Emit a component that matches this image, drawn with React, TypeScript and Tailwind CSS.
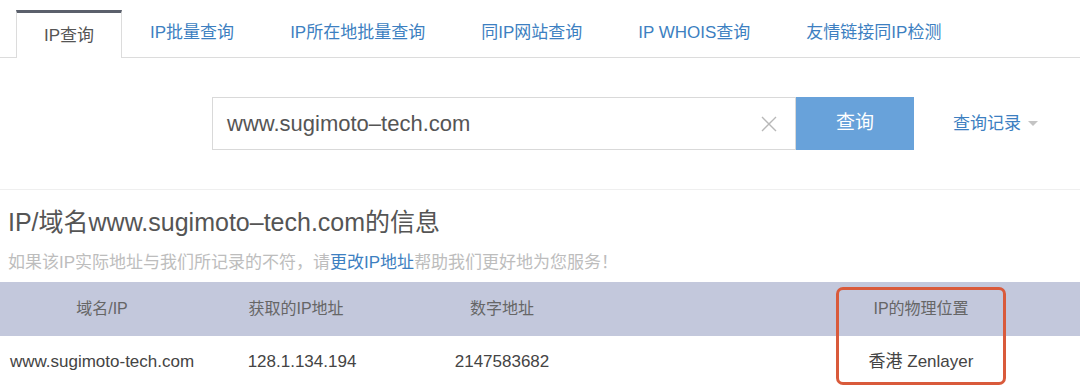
import React from "react";

const font = { fontFamily: '"Liberation Sans", "Noto Sans CJK SC", sans-serif' };

const tabs = ["IP批量查询", "IP所在地批量查询", "同IP网站查询", "IP WHOIS查询", "友情链接同IP检测"];

export default function App() {
  return (
    <div className="relative w-[1080px] h-[387px] bg-white overflow-hidden" style={font}>
      {/* Tabs */}
      <div className="flex items-end h-[58px] pl-4 border-b border-[#dcdcdc]">
        <div className="h-[48px] -mb-px flex items-center px-[27px] bg-white border-x border-[#dcdcdc] border-t-[3px] border-t-[#5b606c] text-[17px] text-[#555]">
          IP查询
        </div>
        {tabs.map((t) => (
          <div key={t} className="h-[48px] flex items-center px-[28px] text-[17px] text-[#3d7fc1]">
            {t}
          </div>
        ))}
      </div>

      {/* Search */}
      <div className="h-[132px] border-b border-[#efefef] flex items-start pt-[39px] pl-[212px]">
        <div className="w-[584px] h-[53px] border border-[#d9d9d9] flex items-center pl-[14px] pr-[16px]">
          <span className="flex-1 text-[22px] text-[#555]">www.sugimoto–tech.com</span>
          <svg width="18" height="18" viewBox="0 0 18 18" className="mr-[1px]">
            <path d="M2 2 L16 16 M16 2 L2 16" stroke="#b8b8b8" strokeWidth="1.4" />
          </svg>
        </div>
        <div className="w-[118px] h-[53px] bg-[#68a2da] flex items-center justify-center text-white text-[19px]">
          查询
        </div>
        <div className="ml-[39px] h-[53px] flex items-center text-[17px] text-[#3d7fc1]">
          查询记录
          <svg width="10" height="6" viewBox="0 0 10 6" className="ml-[7px]">
            <path d="M0 0 L10 0 L5 5 Z" fill="#c4c4c4" />
          </svg>
        </div>
      </div>

      {/* Info */}
      <div className="pl-[8px] pt-[16px]">
        <div className="text-[25px] leading-[32px] text-[#555]">IP/域名www.sugimoto–tech.com的信息</div>
        <div className="mt-[14px] text-[17px] leading-[22px] text-[#bdbdbd]">
          如果该IP实际地址与我们所记录的不符，请<span className="text-[#3d7fc1]">更改IP地址</span>帮助我们更好地为您服务！
        </div>
      </div>

      {/* Table */}
      <div className="mt-[8px]">
        <div className="grid grid-cols-[204px_188px_220px_150px_318px] h-[54px] items-center bg-[#c3c8dc] text-[16px] text-[#666] text-center">
          <div>域名/IP</div>
          <div className="pr-[4px]">获取的IP地址</div>
          <div>数字地址</div>
          <div></div>
          <div>IP的物理位置</div>
        </div>
        <div className="grid grid-cols-[204px_188px_220px_150px_318px] h-[51px] items-center text-[17px] text-[#444] text-center">
          <div>www.sugimoto-tech.com</div>
          <div className="pl-[8px]">128.1.134.194</div>
          <div>2147583682</div>
          <div></div>
          <div>香港 Zenlayer</div>
        </div>
      </div>

      {/* annotation */}
      <div className="absolute left-[836px] top-[287px] w-[170px] h-[98px] border-[3px] border-[#d95a3b] rounded-[7px]" />
    </div>
  );
}
